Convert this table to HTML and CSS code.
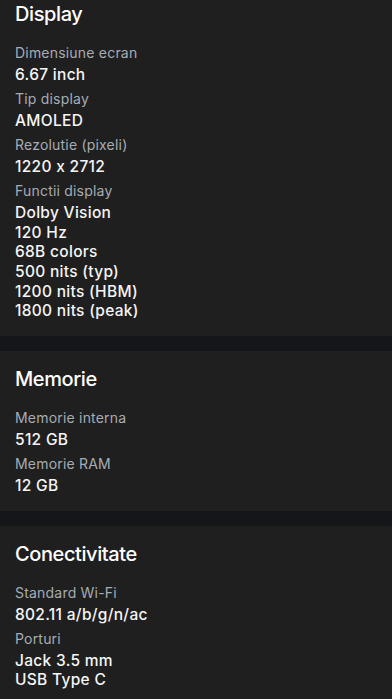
FILE: index.html
```html
<!DOCTYPE html>
<html lang="ro">
<head>
<meta charset="utf-8">
<title>Specificatii</title>
<link rel="stylesheet" href="styles.css">
</head>
<body>
<main class="page">
  <section class="section">
    <h2 class="title">Display</h2>
    <div class="field">
      <div class="label">Dimensiune ecran</div>
      <div class="value">6.67 inch</div>
    </div>
    <div class="field">
      <div class="label">Tip display</div>
      <div class="value">AMOLED</div>
    </div>
    <div class="field">
      <div class="label">Rezolutie (pixeli)</div>
      <div class="value">1220 x 2712</div>
    </div>
    <div class="field">
      <div class="label">Functii display</div>
      <div class="value">Dolby Vision<br>120 Hz<br>68B colors<br>500 nits (typ)<br>1200 nits (HBM)<br>1800 nits (peak)</div>
    </div>
  </section>
  <section class="section">
    <h2 class="title">Memorie</h2>
    <div class="field">
      <div class="label">Memorie interna</div>
      <div class="value">512 GB</div>
    </div>
    <div class="field">
      <div class="label">Memorie RAM</div>
      <div class="value">12 GB</div>
    </div>
  </section>
  <section class="section">
    <h2 class="title">Conectivitate</h2>
    <div class="field">
      <div class="label">Standard Wi-Fi</div>
      <div class="value">802.11 a/b/g/n/ac</div>
    </div>
    <div class="field">
      <div class="label">Porturi</div>
      <div class="value">Jack 3.5 mm<br>USB Type C</div>
    </div>
  </section>
</main>
</body>
</html>
```
FILE: styles.css
```css
html, body {
  margin: 0;
  padding: 0;
  background: #15161a;
}
body {
  font-family: Inter, "Open Sans", "Liberation Sans", sans-serif;
  font-feature-settings: "calt" 0;
  color: #f2f2f2;
  overflow: hidden;
}
.page {
  display: flex;
  flex-direction: column;
  gap: 15px;
  margin-top: -14px;
}
.section {
  background: #1f1f1f;
  padding: 14px 15px 15px;
  display: flex;
  flex-direction: column;
  gap: 4.5px;
}
.title {
  margin: 0 0 10.5px;
  font-size: 20px;
  line-height: 28px;
  font-weight: 500;
  letter-spacing: -0.4px;
  color: #ffffff;
}
.field {
  display: flex;
  flex-direction: column;
  gap: 2px;
}
.label {
  font-size: 14px;
  line-height: 20px;
  letter-spacing: 0.2px;
  color: #a6acb4;
  font-weight: 400;
}
.value {
  font-size: 15.5px;
  line-height: 19.6px;
  letter-spacing: 0.3px;
  font-weight: 500;
  color: #f5f5f5;
}
```
